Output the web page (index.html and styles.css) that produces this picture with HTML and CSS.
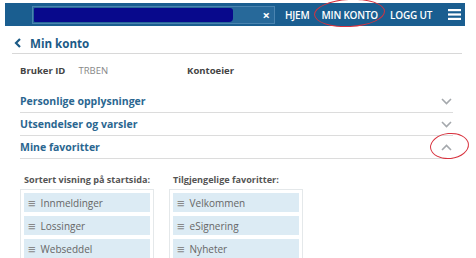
FILE: index.html
```html
<!DOCTYPE html>
<html lang="no">
<head>
    <meta charset="UTF-8">
    <meta name="viewport" content="width=device-width, initial-scale=1.0">
    <title>Min konto</title>
    <link rel="stylesheet" href="styles.css">
</head>
<body>
    <header class="topbar">
        <div class="search">
            <span class="scribble"></span>
            <span class="clear">&times;</span>
        </div>
        <nav class="nav">
            <a href="#">HJEM</a>
            <a href="#" class="marked">MIN KONTO<span class="ring ring-nav"></span></a>
            <a href="#">LOGG UT</a>
        </nav>
        <svg class="burger" width="13" height="11" viewBox="0 0 13 11">
            <rect x="0" y="0" width="13" height="2.2" fill="#fff"/>
            <rect x="0" y="4.4" width="13" height="2.2" fill="#fff"/>
            <rect x="0" y="8.8" width="13" height="2.2" fill="#fff"/>
        </svg>
    </header>

    <main class="page">
        <h1 class="back">
            <svg width="8" height="10" viewBox="0 0 8 10"><path d="M6 1 L2 5 L6 9" fill="none" stroke="#1b5a86" stroke-width="2.2"/></svg>
            Min konto
        </h1>

        <div class="account">
            <span class="label">Bruker ID</span>
            <span class="value">TRBEN</span>
            <span class="label owner">Kontoeier</span>
        </div>

        <div class="panel">
            <div class="row">
                <span>Personlige opplysninger</span>
                <svg class="chev" width="11" height="7" viewBox="0 0 11 7"><path d="M1 1 L5.5 5.5 L10 1" fill="none" stroke="#a4a8ac" stroke-width="1.6"/></svg>
            </div>
            <div class="row">
                <span>Utsendelser og varsler</span>
                <svg class="chev" width="11" height="7" viewBox="0 0 11 7"><path d="M1 1 L5.5 5.5 L10 1" fill="none" stroke="#a4a8ac" stroke-width="1.6"/></svg>
            </div>
            <div class="row">
                <span>Mine favoritter</span>
                <svg class="chev" width="11" height="7" viewBox="0 0 11 7"><path d="M1 6 L5.5 1.5 L10 6" fill="none" stroke="#a4a8ac" stroke-width="1.6"/></svg>
                <span class="ring ring-chev"></span>
            </div>
        </div>

        <div class="favs">
            <div class="col">
                <h3>Sortert visning på startsida:</h3>
                <ul class="list">
                    <li><span class="grip">&equiv;</span>Innmeldinger</li>
                    <li><span class="grip">&equiv;</span>Lossinger</li>
                    <li><span class="grip">&equiv;</span>Webseddel</li>
                </ul>
            </div>
            <div class="col">
                <h3>Tilgjengelige favoritter:</h3>
                <ul class="list">
                    <li><span class="grip">&equiv;</span>Velkommen</li>
                    <li><span class="grip">&equiv;</span>eSignering</li>
                    <li><span class="grip">&equiv;</span>Nyheter</li>
                </ul>
            </div>
        </div>
    </main>
</body>
</html>
```

FILE: styles.css
```css
body {
    margin: 0;
    background: #fff;
    font-family: 'Open Sans', Arial, sans-serif;
    color: #555;
    overflow: hidden;
}
.topbar {
    display: flex;
    align-items: center;
    width: 460px;
    height: 23px;
    margin: 3px 0 0 5px;
    background-color: #1a5e90;
}
.search {
    display: flex;
    align-items: center;
    width: 241px;
    height: 16px;
    margin-left: 27px;
    background-color: #27699a;
    border: 1px solid #4a84b0;
}
.scribble {
    width: 199px;
    height: 14px;
    margin-left: 1px;
    background-color: #08098c;
    border-radius: 1px 3px 4px 1px;
}
.clear {
    margin-left: auto;
    margin-right: 4px;
    color: #fff;
    font-size: 13px;
    font-weight: bold;
    line-height: 14px;
}
.nav {
    display: flex;
    gap: 10px;
    margin-left: 10px;
}
.nav a {
    position: relative;
    color: #fff;
    font-size: 10px;
    font-weight: 600;
    text-decoration: none;
    letter-spacing: -0.2px;
}
.nav a + a {
    margin-left: 2px;
}
.burger {
    margin-left: auto;
    margin-right: 4px;
}
.ring {
    position: absolute;
    border: 1.5px solid #d8323e;
    border-radius: 50%;
}
.ring-nav {
    left: -8px;
    top: -9px;
    width: 69px;
    height: 26px;
    transform: rotate(-3deg);
}
.page {
    padding: 0 14px 0 12px;
}
.back {
    display: flex;
    align-items: center;
    gap: 8px;
    margin: 7px 0 0;
    height: 20px;
    padding-left: 2px;
    border-bottom: 1px solid #d8d8d8;
    font-size: 11.6px;
    font-weight: 700;
    color: #1b5a86;
}
.account {
    display: flex;
    align-items: center;
    height: 14px;
    margin: 9px 0 13px 8px;
    font-size: 9.5px;
}
.account .label {
    font-weight: 700;
    color: #444;
}
.account .value {
    margin-left: 13px;
    color: #888;
}
.account .owner {
    margin-left: 79px;
}
.panel {
    width: 433px;
    margin-left: 8px;
}
.row {
    position: relative;
    display: flex;
    align-items: center;
    justify-content: space-between;
    height: 22px;
    border-bottom: 1px solid #dcdcdc;
    font-size: 10.5px;
    font-weight: 700;
    color: #2a6690;
}
.chev {
    margin-right: 1px;
}
.ring-chev {
    right: -16px;
    top: -3px;
    width: 37px;
    height: 24px;
    transform: rotate(-6deg);
}
.favs {
    display: flex;
    gap: 15px;
    margin: 15px 0 0 8px;
}
.col h3 {
    margin: 0 0 3px 4px;
    height: 12px;
    font-size: 9.1px;
    line-height: 12px;
    font-weight: 700;
    color: #555;
}
.list {
    width: 126px;
    margin: 0;
    padding: 3px 3px 0;
    list-style: none;
    border: 1px solid #e4e8ea;
    border-bottom: none;
}
.list li {
    display: flex;
    align-items: center;
    height: 19px;
    margin-bottom: 4px;
    padding-left: 4px;
    background-color: #dcebf4;
    font-size: 10px;
    color: #666;
}
.grip {
    margin-right: 5px;
    font-size: 13px;
    color: #888;
}
```
